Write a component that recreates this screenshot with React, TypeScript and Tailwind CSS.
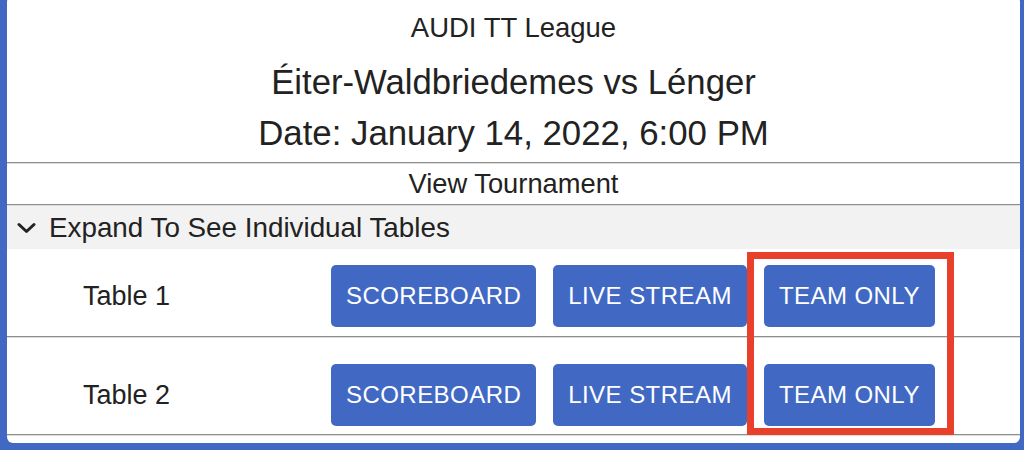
const rows = ["Table 1", "Table 2"];
const buttons = ["SCOREBOARD", "LIVE STREAM", "TEAM ONLY"];

function Divider() {
  return <div className="h-[2px] border-t border-[#8e8e8e] bg-[#dcdcdc]" />;
}

export default function App() {
  return (
    <div
      className="h-[450px] w-[1024px] overflow-hidden bg-[#4169c4] pr-[4px] pl-[7px] text-[#222]"
      style={{ fontFamily: '"Liberation Sans", Arial, sans-serif' }}
    >
      <div className="relative -mt-[4px] h-[447px] rounded-md bg-white">
        {/* Header */}
        <div className="pt-[12px] pb-[4px] text-center">
          <div className="text-[27.5px] leading-[40px]">AUDI TT League</div>
          <div className="mt-[9px] text-[34.7px] leading-[50px]">
            Éiter-Waldbriedemes vs Lénger
          </div>
          <div className="mt-px text-[34.8px] leading-[50px]">
            Date: January 14, 2022, 6:00 PM
          </div>
        </div>
        <Divider />
        <div className="text-center text-[27.3px] leading-[40px]">View Tournament</div>
        <Divider />

        {/* Accordion */}
        <div className="flex h-[43px] items-center bg-[#f2f2f2] pl-[10px]">
          <svg width="19" height="12" viewBox="0 0 19 12" fill="none">
            <polyline
              points="2,2.5 9.5,9.5 17,2.5"
              stroke="#222"
              strokeWidth="3"
              strokeLinecap="round"
              strokeLinejoin="round"
            />
          </svg>
          <span className="ml-[13px] text-[27.8px] leading-none">
            Expand To See Individual Tables
          </span>
        </div>

        <div className="relative">
          {rows.map((label, i) => (
            <div key={label}>
              <div
                className={
                  "flex items-center " + (i === 0 ? "pt-[16px] pb-[9px]" : "pt-[26px] pb-[8px]")
                }
              >
                <div className="w-[324px] pl-[76px] text-[27px]">{label}</div>
                <div className="flex gap-[17px]">
                  {buttons.map((b) => (
                    <button
                      key={b}
                      className="h-[62px] rounded-[5px] bg-[#4169c4] px-[15px] text-[24px] tracking-[0.45px] text-white"
                    >
                      {b}
                    </button>
                  ))}
                </div>
              </div>
              <Divider />
            </div>
          ))}
          {/* highlight box */}
          <div className="absolute top-[3px] left-[740px] h-[183px] w-[207px] border-[7px] border-[#e8402a]" />
        </div>
      </div>
    </div>
  );
}
